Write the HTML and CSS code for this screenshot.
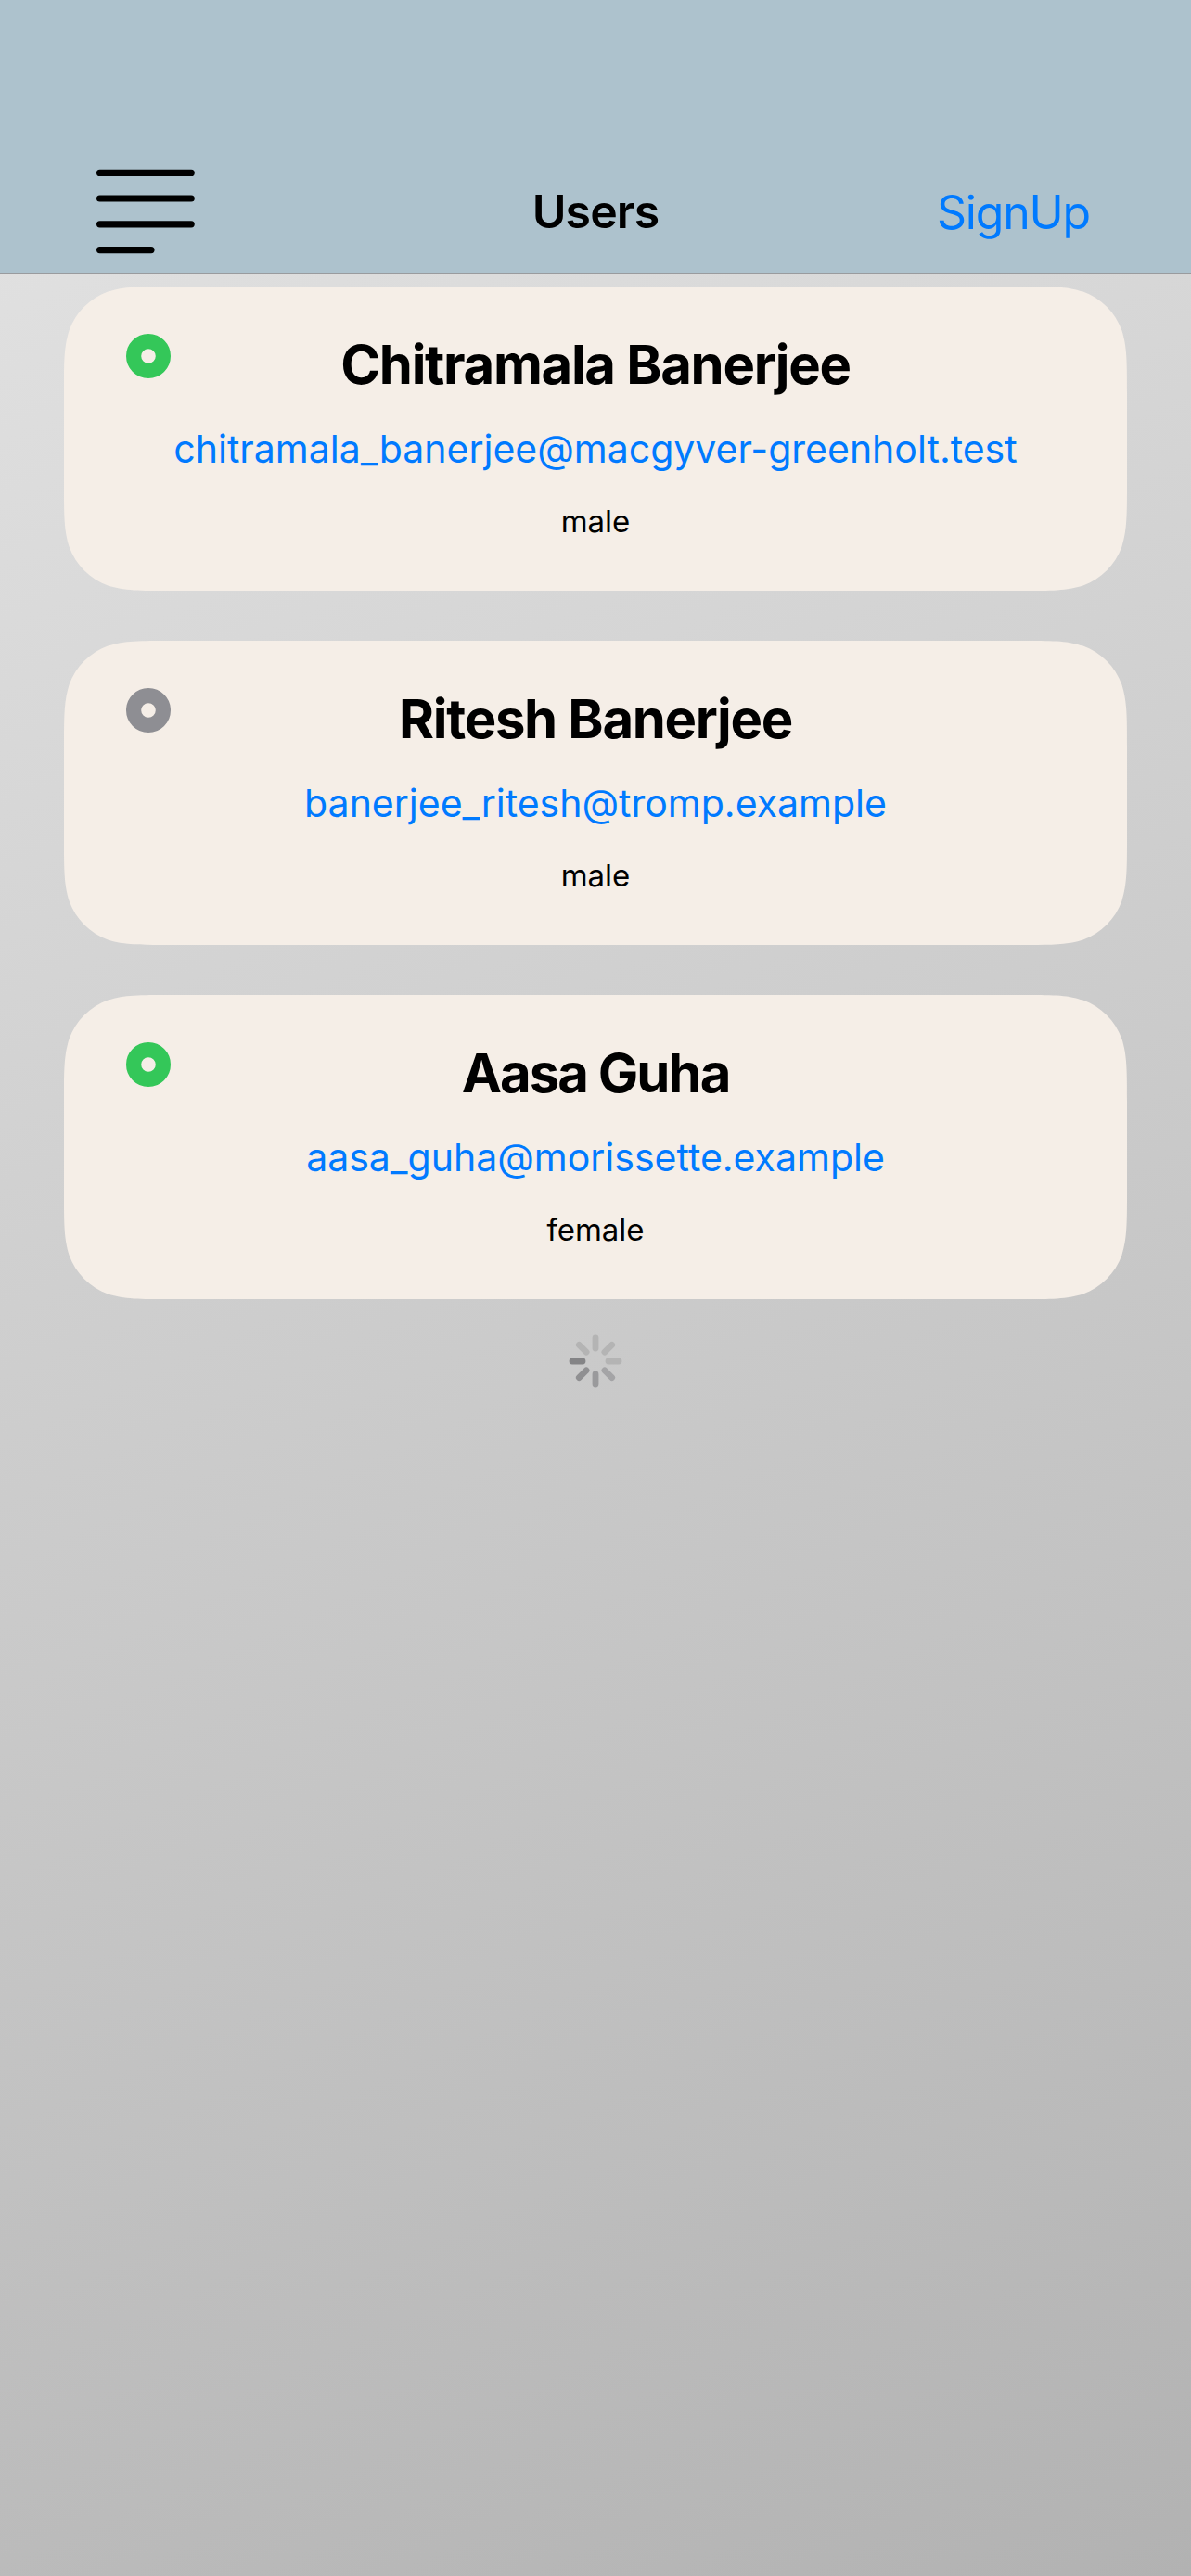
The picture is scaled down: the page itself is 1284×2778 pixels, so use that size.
FILE: index.html
```
<!DOCTYPE html>
<html lang="en">
<head>
<meta charset="utf-8">
<title>Users</title>
<link rel="stylesheet" href="styles.css">
</head>
<body>
<div class="screen">
  <header class="navbar">
    <svg class="menu-icon" width="106" height="92" viewBox="0 0 106 92" fill="none" stroke="#000" stroke-width="7.2" stroke-linecap="round">
      <path d="M3.6 4.4H102.2M3.6 32H102.2M3.6 59.8H102.2M3.6 87.6H59"/>
    </svg>
    <h1 class="title">Users</h1>
    <a class="signup">SignUp</a>
  </header>
  <main class="list">
    <article class="card">
      <svg class="status online" viewBox="0 0 48 48"><circle cx="24" cy="24" r="15.9"/></svg>
      <h2 class="name">Chitramala Banerjee</h2>
      <a class="email">chitramala_banerjee@macgyver-greenholt.test</a>
      <p class="gender">male</p>
    </article>
    <article class="card">
      <svg class="status offline" viewBox="0 0 48 48"><circle cx="24" cy="24" r="15.9"/></svg>
      <h2 class="name">Ritesh Banerjee</h2>
      <a class="email">banerjee_ritesh@tromp.example</a>
      <p class="gender">male</p>
    </article>
    <article class="card">
      <svg class="status online" viewBox="0 0 48 48"><circle cx="24" cy="24" r="15.9"/></svg>
      <h2 class="name name-tight">Aasa Guha</h2>
      <a class="email">aasa_guha@morissette.example</a>
      <p class="gender">female</p>
    </article>
  </main>
  <svg class="spinner" width="60" height="60" viewBox="-30 -30 60 60" stroke-width="6.8" stroke-linecap="round">
    <path stroke="#b4b4b4" d="M0-14V-25"/>
    <path stroke="#b4b4b4" d="M9.9-9.9 17.7-17.7"/>
    <path stroke="#b4b4b4" d="M14 0H25"/>
    <path stroke="#a4a4a6" d="M9.9 9.9 17.7 17.7"/>
    <path stroke="#9a9a9c" d="M0 14V25"/>
    <path stroke="#909092" d="M-9.9 9.9-17.7 17.7"/>
    <path stroke="#848486" d="M-14 0H-25"/>
    <path stroke="#b4b4b4" d="M-9.9-9.9-17.7-17.7"/>
  </svg>
</div>
</body>
</html>
```
FILE: styles.css
```
* {
  box-sizing: border-box;
}

body {
  margin: 0;
  font-family: "Inter", "Liberation Sans", sans-serif;
  color: #000;
}

h1, h2, p {
  margin: 0;
}

.screen {
  width: 1284px;
  height: 2778px;
  overflow: hidden;
  display: flex;
  flex-direction: column;
  background: linear-gradient(155.2deg, #e4e4e4, #b2b2b2);
}

.navbar {
  height: 295px;
  flex: none;
  display: grid;
  grid-template-columns: 1fr auto 1fr;
  align-items: start;
  padding: 182px 104px 0;
  background: #adc2cd;
  border-bottom: 1px solid #999b9e;
}

.title,
.signup {
  font-size: 50px;
  line-height: 60px;
}

.title {
  margin-top: 16px;
  font-weight: 600;
  letter-spacing: -0.9px;
}

.signup {
  margin: 17px 5px 0 0;
  justify-self: end;
  color: #007aff;
  letter-spacing: -1.2px;
}

.list {
  display: flex;
  flex-direction: column;
  gap: 54px;
  padding: 14px 69px 0;
}

/* Card with continuous-curvature corners */
.card {
  height: 328px;
  display: grid;
  grid-template-columns: 48px 1fr 48px;
  align-content: start;
  justify-items: center;
  padding: 48px 67px 0;
  background: #f5eee7;
  clip-path: path("M114.65 0H1031.35C1064.36 0 1080.87 0 1095.75 4.91L1098.64 5.62C1118.04 12.68 1133.32 27.96 1140.38 47.36C1146 65.13 1146 81.64 1146 114.65V213.35C1146 246.36 1146 262.87 1140.38 280.64C1133.32 300.04 1118.04 315.32 1098.64 322.38C1080.87 328 1064.36 328 1031.35 328H114.65C81.64 328 65.13 328 47.36 322.38C27.96 315.32 12.68 300.04 5.62 280.64C0 262.87 0 246.36 0 213.35V114.65C0 81.64 0 65.13 5.62 47.36C12.68 27.96 27.96 12.68 47.36 5.62C65.13 0 81.64 0 114.65 0Z");
}

.status {
  width: 48px;
  height: 48px;
  margin-top: 3px;
  fill: none;
  stroke-width: 16.2;
}

.online {
  stroke: #34c759;
}

.offline {
  stroke: #8e8e93;
}

.name {
  font-size: 58px;
  line-height: 72px;
  font-weight: 700;
  letter-spacing: -1.3px;
}

.name-tight {
  letter-spacing: -1.95px;
}

.email {
  grid-column: 1 / -1;
  margin-top: 30px;
  font-size: 41px;
  line-height: 50px;
  color: #007aff;
}

.gender {
  grid-column: 1 / -1;
  margin-top: 33px;
  font-size: 33px;
  line-height: 40px;
}

.spinner {
  flex: none;
  align-self: center;
  margin-top: 37px;
}
```
